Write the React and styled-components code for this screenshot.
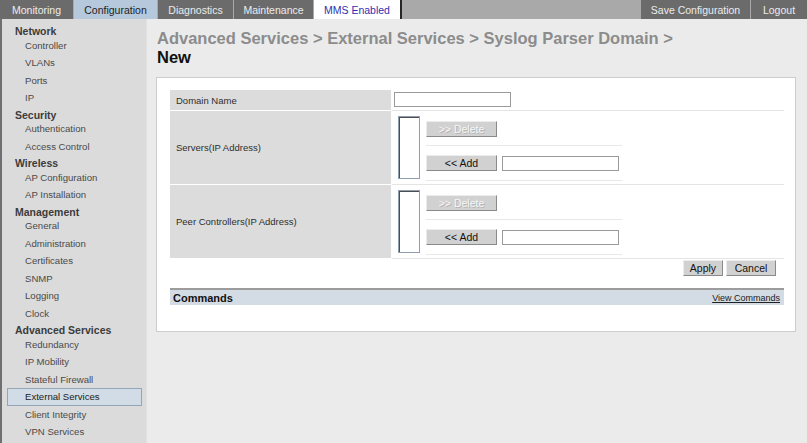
import React from "react";
import styled, { createGlobalStyle } from "styled-components";

const GlobalStyle = createGlobalStyle`
	html, body {
		margin: 0;
		padding: 0;
		width: 807px;
		height: 443px;
		overflow: hidden;
		background: #ebebeb;
		font-family: "Liberation Sans", Arial, sans-serif;
	}
`;

const NAV = [
	{ title: "Network", items: ["Controller", "VLANs", "Ports", "IP"] },
	{ title: "Security", items: ["Authentication", "Access Control"] },
	{ title: "Wireless", items: ["AP Configuration", "AP Installation"] },
	{
		title: "Management",
		items: ["General", "Administration", "Certificates", "SNMP", "Logging", "Clock"],
	},
	{
		title: "Advanced Services",
		items: [
			"Redundancy",
			"IP Mobility",
			"Stateful Firewall",
			"External Services",
			"Client Integrity",
			"VPN Services",
		],
	},
];

const TABS = [
	{ label: "Monitoring", width: 73 },
	{ label: "Configuration", width: 83, kind: "active" },
	{ label: "Diagnostics", width: 75 },
	{ label: "Maintenance", width: 79 },
	{ label: "MMS Enabled", width: 88, kind: "mms" },
];

// one list group: list box + delete/add controls
const ListField = () => (
	<ValueCell $list>
		<ListBox />
		<Controls>
			<SubRow $pad="5px 0 8px">
				<Button $width={71} disabled>
					&gt;&gt; Delete
				</Button>
			</SubRow>
			<SubRow $pad="9px 0 9px">
				<Button $width={71}>&lt;&lt; Add</Button>
				<TextInput />
			</SubRow>
		</Controls>
	</ValueCell>
);

const App = () => {
	return (
		<Page>
			<GlobalStyle />
			<TopBar>
				{TABS.map((t) => (
					<Tab key={t.label} $width={t.width} $kind={t.kind}>
						{t.label}
					</Tab>
				))}
				<Spacer />
				<Tab $width={109}>Save Configuration</Tab>
				<Tab $width={56}>Logout</Tab>
			</TopBar>

			<Body>
				<Sidebar>
					{NAV.map((g) => (
						<React.Fragment key={g.title}>
							<NavHeading>{g.title}</NavHeading>
							{g.items.map((i) => (
								<NavItem key={i} $selected={i === "External Services"}>
									{i}
								</NavItem>
							))}
						</React.Fragment>
					))}
				</Sidebar>

				<Main>
					<Breadcrumb>Advanced Services &gt; External Services &gt; Syslog Parser Domain &gt;</Breadcrumb>
					<PageTitle>New</PageTitle>

					<Panel>
						<FormRow $height={20}>
							<LabelCell>Domain Name</LabelCell>
							<ValueCell>
								<TextInput />
							</ValueCell>
						</FormRow>
						<FormRow>
							<LabelCell>Servers(IP Address)</LabelCell>
							<ListField />
						</FormRow>
						<FormRow>
							<LabelCell>Peer Controllers(IP Address)</LabelCell>
							<ListField />
						</FormRow>

						<Actions>
							<Button $width={40}>Apply</Button>
							<Button $width={50}>Cancel</Button>
						</Actions>

						<CommandsBar>
							<span>Commands</span>
							<CommandsLink>View Commands</CommandsLink>
						</CommandsBar>
					</Panel>
				</Main>
			</Body>
		</Page>
	);
};

export default App;

const Page = styled.div`
	display: flex;
	flex-direction: column;
	width: 807px;
	height: 443px;
`;

const TopBar = styled.div`
	display: flex;
	height: 19px;
	gap: 1px;
	background: #a9a9a9;
	flex-shrink: 0;
`;

const Tab = styled.div`
	width: ${(p) => p.$width}px;
	display: flex;
	align-items: center;
	justify-content: center;
	box-sizing: border-box;
	font-size: 10.5px;
	background: ${(p) =>
		p.$kind === "active" ? "#b5c8dc" : p.$kind === "mms" ? "#ffffff" : "#6b6b6b"};
	color: ${(p) =>
		p.$kind === "active" ? "#1e1e1e" : p.$kind === "mms" ? "#2f2fb4" : "#ececec"};
	border-right: ${(p) => (p.$kind === "mms" ? "2px solid #262626" : "none")};
`;

const Spacer = styled.div`
	flex: 1;
`;

const Body = styled.div`
	display: flex;
	flex: 1;
	min-height: 0;
`;

const Sidebar = styled.div`
	width: 146px;
	box-sizing: border-box;
	flex-shrink: 0;
	background: #dbdbdb;
	border-left: 2px solid #707070;
	padding: 4px 4px 0 5px;
	display: flex;
	flex-direction: column;
`;

const NavHeading = styled.div`
	box-sizing: border-box;
	font-size: 10.5px;
	font-weight: bold;
	color: #3c3c3c;
	padding: 3px 0 0 8px;
	height: 13.5px;
	line-height: 10.5px;
	flex-shrink: 0;
`;

const NavItem = styled.div`
	font-size: 9.6px;
	height: 17.5px;
	line-height: 15.5px;
	flex-shrink: 0;
	box-sizing: border-box;
	padding-left: 17px;
	border: 1px solid ${(p) => (p.$selected ? "#93a6b8" : "transparent")};
	background: ${(p) => (p.$selected ? "#d2dce6" : "transparent")};
	color: ${(p) => (p.$selected ? "#222" : "#4a4a4a")};
`;

const Main = styled.div`
	flex: 1;
	background: #ebebeb;
	padding: 10px 12px 0 9px;
	border-left: 1px solid #e2e2e2;
	box-sizing: border-box;
`;

const Breadcrumb = styled.div`
	font-size: 16.5px;
	font-weight: bold;
	line-height: 19px;
	color: #8c8c8c;
	padding-left: 1px;
`;

const PageTitle = styled.div`
	font-size: 16.5px;
	font-weight: bold;
	line-height: 19px;
	color: #111;
	padding-left: 1px;
	margin-bottom: 10px;
`;

const Panel = styled.div`
	width: 640px;
	box-sizing: border-box;
	background: #fff;
	border: 1px solid #cdcdcd;
	padding: 12px 11px 26px 13px;
`;

const FormRow = styled.div`
	display: grid;
	grid-template-columns: 221px 1fr;
	column-gap: 1px;
	height: ${(p) => (p.$height ? `${p.$height + 1}px` : "auto")};
`;

const LabelCell = styled.div`
	display: flex;
	align-items: center;
	background: #dcdcdc;
	border-bottom: 1px solid #fff;
	padding-left: 6px;
	font-size: 9.5px;
	color: #2e2e2e;
`;

const ValueCell = styled.div`
	display: flex;
	align-items: flex-start;
	border-bottom: 1px solid #e4e4e4;
	padding: ${(p) => (p.$list ? "5px 0 3px 6px" : "2px 0 0 2px")};
	gap: 6px;
`;

const ListBox = styled.div`
	width: 22px;
	height: 63px;
	box-sizing: border-box;
	border: 1px solid #8f9fae;
	box-shadow: inset 1px 1px 0 #4d4d4d;
	background: #fff;
`;

const Controls = styled.div`
	width: 196px;
	display: flex;
	flex-direction: column;
`;

const SubRow = styled.div`
	display: flex;
	align-items: center;
	gap: 5px;
	padding: ${(p) => p.$pad};
	border-bottom: 1px solid #e8e8e8;
`;

const TextInput = styled.div`
	width: 117px;
	height: 15px;
	box-sizing: border-box;
	border: 1px solid #9a9a9a;
	background: #fff;
`;

const Button = styled.button`
	width: ${(p) => p.$width}px;
	height: 16px;
	box-sizing: border-box;
	padding: 0;
	margin: 0;
	font-family: "Liberation Sans", Arial, sans-serif;
	font-size: 10.5px;
	line-height: 14px;
	background: #d1d1d1;
	border: 1px solid;
	border-color: #ececec #8a8a8a #8a8a8a #ececec;
	color: #111;
	&:disabled {
		color: #f6f6f6;
		text-shadow: 1px 1px 0 #b4b4b4;
	}
`;

const Actions = styled.div`
	display: flex;
	justify-content: flex-end;
	gap: 3px;
	padding-right: 8px;
	margin-top: 1px;
`;

const CommandsBar = styled.div`
	margin-top: 12px;
	height: 17px;
	box-sizing: border-box;
	border-top: 2px solid #9c9c9c;
	background: #d3dbe5;
	display: flex;
	align-items: center;
	justify-content: space-between;
	padding: 0 4px 0 3px;
	font-size: 11px;
	font-weight: bold;
	color: #111;
`;

const CommandsLink = styled.span`
	font-size: 9px;
	font-weight: normal;
	text-decoration: underline;
	color: #222;
`;
